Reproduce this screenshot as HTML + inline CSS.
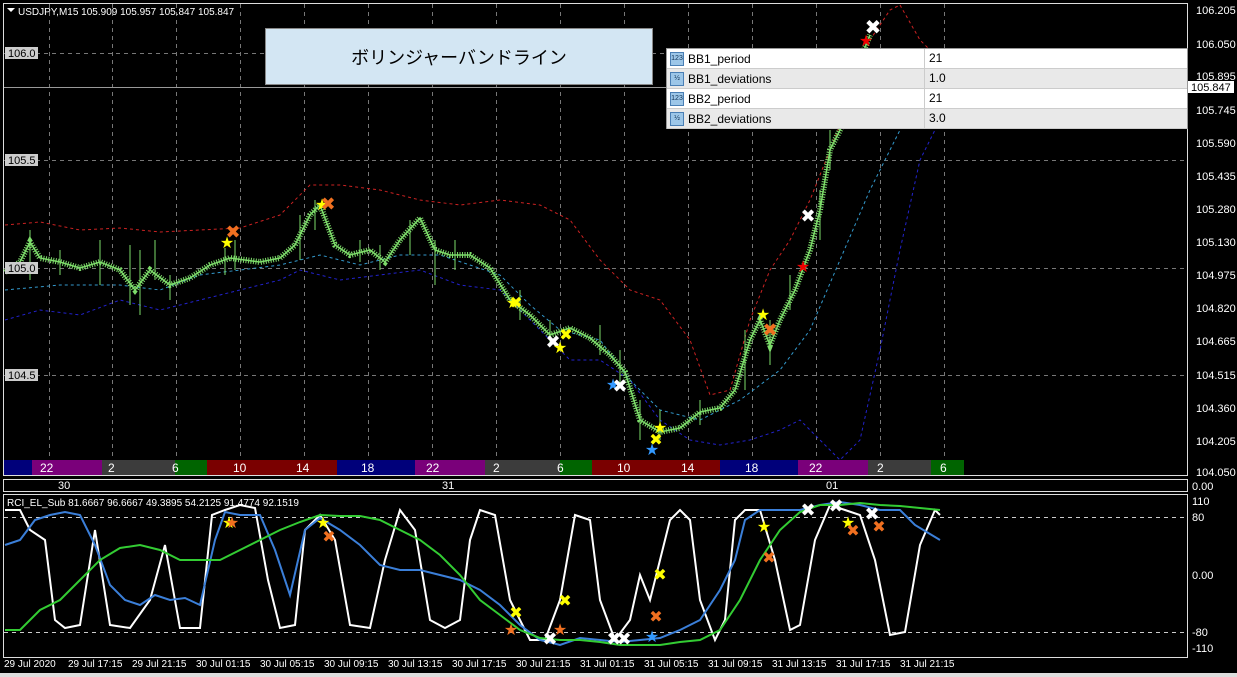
<!DOCTYPE html>
<html><head><meta charset="utf-8"><style>
body{margin:0;background:#000;width:1237px;height:677px;overflow:hidden;font-family:"Liberation Sans",Tahoma,sans-serif}
svg{position:absolute;left:0;top:0}
#title{position:absolute;left:265px;top:28px;width:386px;height:55px;background:#d3e6f3;border:1px solid #888;font:18px "Liberation Sans","Noto Sans CJK JP",sans-serif;color:#000;display:flex;align-items:center;justify-content:center}
#tbl{position:absolute;left:666px;top:48px;width:520px;background:#fff;border:1px solid #999;border-bottom:none;font-size:12px;color:#000}
#tbl div{height:19px;display:flex;align-items:center;border-bottom:1px solid #ccc}
#tbl div:nth-child(even){background:#e9e9e9}
#tbl span.i{width:12px;height:12px;margin:0 4px 0 3px;background:#9cc6e8;border:1px solid #4a7fb5;font-size:7px;line-height:12px;text-align:center;color:#135}
#tbl span.n{width:236px}
#tbl span.v{border-left:1px solid #ccc;padding-left:4px;height:19px;line-height:19px}
</style></head><body>
<svg width="1237" height="677" xmlns="http://www.w3.org/2000/svg">
<g stroke="#ddd" fill="none" stroke-width="1">
<rect x="3.5" y="3.5" width="1184" height="472"/>
<rect x="3.5" y="479.5" width="1184" height="12"/>
<rect x="3.5" y="494.5" width="1184" height="163"/>
</g>
<g stroke="#777" stroke-dasharray="4,4" stroke-width="1">
<path d="M49.5 4V460M112.5 4V460M176.5 4V460M240.5 4V460M304.5 4V460M368.5 4V460M432.5 4V460M496.5 4V460M560.5 4V460M624.5 4V460M688.5 4V460M752.5 4V460M816.5 4V460M880.5 4V460M944.5 4V460"/>
<path d="M4 53.5H1187M4 160.5H1187M4 268.5H1187M4 375.5H1187"/>
<path d="M4 517.5H1187M4 632.5H1187" stroke="#ccc"/>
</g>
<line x1="4" y1="87.5" x2="1187" y2="87.5" stroke="#999"/>
<g fill="none" stroke-dasharray="3,3" stroke-width="1">
<path stroke="#c22" d="M5 225 40 222 80 230 120 228 160 232 200 230 240 228 280 215 310 185 340 185 380 190 420 200 460 205 500 200 540 205 570 220 600 260 630 290 660 300 690 340 710 395 730 390 750 320 770 270 790 240 810 200 830 150 850 100 870 40 890 10 900 5"/>
<path stroke="#c22" d="M900 5 920 40 940 60 960 70"/>
<path stroke="#22c" d="M5 320 40 310 80 315 120 300 160 310 200 300 240 290 280 280 300 270 340 280 380 275 420 270 460 285 500 290 540 330 570 360 600 360 630 380 660 420 690 440 720 445 750 440 780 430 800 420 820 440 840 460 860 440 880 350 900 250 920 160 940 120"/>
<path stroke="#39c" d="M5 290 60 285 120 285 160 290 200 275 240 270 280 265 320 255 360 265 400 255 440 255 470 265 500 275 530 305 560 330 600 340 630 380 660 410 700 420 740 400 780 370 810 330 840 260 870 190 900 130 940 90"/>
</g>
<g stroke="#7ddc6a" fill="none">
<path stroke-width="6" stroke-dasharray="1,1.5" d="M5 272 20 262 30 242 40 258 60 262 80 268 100 262 120 270 135 290 150 270 170 285 190 278 210 265 230 258 260 262 280 258 295 245 310 215 320 205 335 245 350 255 370 250 385 262 400 240 420 218 435 250 450 255 470 255 490 268 510 300 530 315 550 335 570 328 590 338 610 355 625 372 640 420 660 432 680 428 700 412 720 408 735 390 750 340 760 320 770 345 780 320 795 290 810 250 820 210 830 150 840 130 850 110 860 60 870 35"/>
<path stroke-width="1.5" d="M5 272 20 262 30 242 40 258 60 262 80 268 100 262 120 270 135 290 150 270 170 285 190 278 210 265 230 258 260 262 280 258 295 245 310 215 320 205 335 245 350 255 370 250 385 262 400 240 420 218 435 250 450 255 470 255 490 268 510 300 530 315 550 335 570 328 590 338 610 355 625 372 640 420 660 432 680 428 700 412 720 408 735 390 750 340 760 320 770 345 780 320 795 290 810 250 820 210 830 150 840 130 850 110 860 60 870 35"/>
<path stroke-width="1" d="M30 230V280M60 250V275M100 240V285M130 245V305M140 250V315M155 240V280M170 275V300M225 248V275M235 240V270M300 215V260M315 200V230M360 240V262M380 245V270M410 220V255M435 240V285M455 240V270M520 290V320M550 320V345M600 325V355M620 350V385M640 400V440M660 410V440M700 400V425M745 330V390M770 320V365M790 275V310M820 190V240M830 130V170"/>
</g>
<g>
<rect x="4" y="460" width="28" height="15" fill="#00007a"/>
<rect x="32" y="460" width="70" height="15" fill="#7a007a"/>
<rect x="102" y="460" width="73" height="15" fill="#3c3c3c"/>
<rect x="175" y="460" width="32" height="15" fill="#006400"/>
<rect x="207" y="460" width="130" height="15" fill="#7a0000"/>
<rect x="337" y="460" width="78" height="15" fill="#00007a"/>
<rect x="415" y="460" width="70" height="15" fill="#7a007a"/>
<rect x="485" y="460" width="75" height="15" fill="#3c3c3c"/>
<rect x="560" y="460" width="32" height="15" fill="#006400"/>
<rect x="592" y="460" width="128" height="15" fill="#7a0000"/>
<rect x="720" y="460" width="78" height="15" fill="#00007a"/>
<rect x="798" y="460" width="70" height="15" fill="#7a007a"/>
<rect x="868" y="460" width="63" height="15" fill="#3c3c3c"/>
<rect x="931" y="460" width="33" height="15" fill="#006400"/>
</g>
<g fill="#fff" font-size="12" font-family="Liberation Sans">
<text x="40" y="472">22</text><text x="108" y="472">2</text><text x="172" y="472">6</text><text x="233" y="472">10</text><text x="296" y="472">14</text><text x="361" y="472">18</text><text x="426" y="472">22</text><text x="493" y="472">2</text><text x="557" y="472">6</text><text x="617" y="472">10</text><text x="681" y="472">14</text><text x="745" y="472">18</text><text x="809" y="472">22</text><text x="877" y="472">2</text><text x="940" y="472">6</text>
<text x="58" y="489" font-size="11">30</text><text x="442" y="489" font-size="11">31</text><text x="826" y="489" font-size="11">01</text>
</g>
<g fill="none" stroke-width="2">
<path stroke="#fff" d="M5 510 20 510 30 530 45 540 55 620 65 628 80 625 95 530 110 625 130 628 150 600 165 545 180 628 200 628 212 515 225 510 240 505 255 508 268 580 280 628 295 625 305 530 320 515 335 540 350 625 370 628 385 560 400 510 415 530 430 620 445 628 460 620 470 540 480 510 495 515 510 600 530 640 545 640 560 600 575 515 590 520 600 600 615 640 630 620 640 575 650 600 660 560 670 520 680 510 690 520 700 600 715 640 725 620 735 520 745 510 760 510 775 560 790 630 800 625 815 540 830 505 845 510 860 515 875 560 890 635 905 632 920 545 935 510 940 515"/>
<path stroke="#3b7fd9" d="M5 545 20 540 35 520 50 515 65 512 80 515 95 545 110 585 125 600 140 605 155 595 170 600 185 598 200 605 215 540 225 512 240 515 260 515 275 550 290 595 305 530 320 518 340 530 360 545 380 565 400 570 420 570 440 575 460 580 480 590 500 605 520 625 540 640 560 645 580 638 600 640 620 642 640 640 660 638 680 630 700 620 720 590 735 560 745 520 760 510 780 510 800 510 820 505 840 502 860 505 880 510 900 510 915 525 940 540"/>
<path stroke="#33cc33" d="M5 630 20 630 40 610 60 600 80 580 100 560 120 548 140 545 160 550 180 560 200 560 220 560 240 550 260 540 280 530 300 522 320 515 340 516 360 516 380 520 400 530 420 540 440 555 460 575 480 600 500 615 520 630 540 638 560 640 580 640 600 642 620 645 640 645 660 645 680 642 700 640 720 630 740 600 760 560 780 530 800 512 820 505 840 505 860 503 880 505 900 506 920 508 940 510"/>
</g>
<g font-size="16" text-anchor="middle" font-family="DejaVu Sans">
<text x="227" y="248" fill="#ff0">★</text><text x="233" y="238" fill="#f07020" font-size="18">✖</text>
<text x="322" y="210" fill="#ff0">★</text><text x="328" y="210" fill="#f07020" font-size="18">✖</text>
<text x="513" y="308" fill="#ff0">★</text><text x="516" y="308" fill="#ff0" font-size="16">✖</text>
<text x="553" y="348" fill="#fff" font-size="18">✖</text><text x="560" y="353" fill="#ff0">★</text><text x="566" y="340" fill="#ff0" font-size="16">✖</text>
<text x="613" y="390" fill="#39f">★</text><text x="620" y="392" fill="#fff" font-size="18">✖</text>
<text x="652" y="455" fill="#39f">★</text><text x="656" y="445" fill="#ff0" font-size="16">✖</text><text x="660" y="433" fill="#ff0">★</text>
<text x="763" y="320" fill="#ff0">★</text><text x="770" y="336" fill="#f07020" font-size="18">✖</text>
<text x="803" y="272" fill="#e00">★</text><text x="808" y="222" fill="#fff" font-size="18">✖</text>
<text x="866" y="46" fill="#e00">★</text><text x="873" y="34" fill="#fff" font-size="20">✖</text>
<text x="229" y="528" fill="#ff0">★</text><text x="232" y="528" fill="#f07020">★</text>
<text x="323" y="528" fill="#ff0">★</text><text x="329" y="542" fill="#f07020" font-size="16">✖</text>
<text x="511" y="635" fill="#f07020">★</text><text x="516" y="618" fill="#ff0" font-size="16">✖</text>
<text x="550" y="645" fill="#fff" font-size="18">✖</text><text x="560" y="635" fill="#f07020">★</text><text x="565" y="606" fill="#ff0" font-size="16">✖</text>
<text x="614" y="645" fill="#fff" font-size="18">✖</text><text x="624" y="645" fill="#fff" font-size="18">✖</text><text x="652" y="642" fill="#39f">★</text>
<text x="656" y="622" fill="#f07020" font-size="16">✖</text><text x="660" y="580" fill="#ff0" font-size="16">✖</text>
<text x="764" y="532" fill="#ff0">★</text><text x="769" y="563" fill="#f07020" font-size="16">✖</text>
<text x="808" y="516" fill="#fff" font-size="18">✖</text><text x="836" y="512" fill="#fff" font-size="18">✖</text>
<text x="848" y="528" fill="#ff0">★</text><text x="853" y="536" fill="#f07020" font-size="16">✖</text>
<text x="872" y="520" fill="#fff" font-size="18">✖</text><text x="879" y="532" fill="#f07020" font-size="16">✖</text>
</g>
<g fill="#fff" font-size="11" font-family="Liberation Sans">
<text x="1196" y="14">106.205</text><text x="1196" y="48">106.050</text><text x="1196" y="80">105.895</text>
<text x="1196" y="114">105.745</text><text x="1196" y="147">105.590</text><text x="1196" y="180">105.435</text>
<text x="1196" y="213">105.280</text><text x="1196" y="246">105.130</text><text x="1196" y="279">104.975</text>
<text x="1196" y="312">104.820</text><text x="1196" y="345">104.665</text><text x="1196" y="379">104.515</text>
<text x="1196" y="412">104.360</text><text x="1196" y="445">104.205</text><text x="1196" y="476">104.050</text>
<text x="1192" y="490">0.00</text>
<text x="1192" y="505">110</text><text x="1192" y="521">80</text><text x="1192" y="579">0.00</text>
<text x="1192" y="636">-80</text><text x="1192" y="652">-110</text>
</g>
<rect x="1188" y="81" width="46" height="12" fill="#fff"/>
<text x="1191" y="91" font-size="11" fill="#000" font-family="Liberation Sans">105.847</text>
<rect x="5" y="47" width="33" height="12" fill="#ccc"/>
<text x="8" y="57" font-size="11" fill="#000" font-family="Liberation Sans">106.0</text>
<rect x="5" y="154" width="33" height="12" fill="#ccc"/>
<text x="8" y="164" font-size="11" fill="#000" font-family="Liberation Sans">105.5</text>
<rect x="5" y="262" width="33" height="12" fill="#ccc"/>
<text x="8" y="272" font-size="11" fill="#000" font-family="Liberation Sans">105.0</text>
<rect x="5" y="369" width="33" height="12" fill="#ccc"/>
<text x="8" y="379" font-size="11" fill="#000" font-family="Liberation Sans">104.5</text>
<g fill="#fff" font-size="10" font-family="Liberation Sans">
<text x="4" y="667">29 Jul 2020</text><text x="68" y="667">29 Jul 17:15</text><text x="132" y="667">29 Jul 21:15</text><text x="196" y="667">30 Jul 01:15</text><text x="260" y="667">30 Jul 05:15</text><text x="324" y="667">30 Jul 09:15</text><text x="388" y="667">30 Jul 13:15</text><text x="452" y="667">30 Jul 17:15</text><text x="516" y="667">30 Jul 21:15</text><text x="580" y="667">31 Jul 01:15</text><text x="644" y="667">31 Jul 05:15</text><text x="708" y="667">31 Jul 09:15</text><text x="772" y="667">31 Jul 13:15</text><text x="836" y="667">31 Jul 17:15</text><text x="900" y="667">31 Jul 21:15</text>
</g>
<rect x="0" y="673" width="1237" height="4" fill="#ddd"/>
<text x="18" y="15" font-size="10" fill="#fff" font-family="Liberation Sans">USDJPY,M15  105.909 105.957 105.847 105.847</text>
<path d="M7 8h8l-4 4z" fill="#fff"/>
<text x="7" y="506" font-size="10" fill="#fff" font-family="Liberation Sans">RCI_EL_Sub 81.6667 96.6667 49.3895 54.2125 91.4774 92.1519</text>
</svg>
<div id="title">ボリンジャーバンドライン</div>
<div id="tbl">
<div><span class="i">123</span><span class="n">BB1_period</span><span class="v">21</span></div>
<div><span class="i">½</span><span class="n">BB1_deviations</span><span class="v">1.0</span></div>
<div><span class="i">123</span><span class="n">BB2_period</span><span class="v">21</span></div>
<div><span class="i">½</span><span class="n">BB2_deviations</span><span class="v">3.0</span></div>
</div>
</body></html>
